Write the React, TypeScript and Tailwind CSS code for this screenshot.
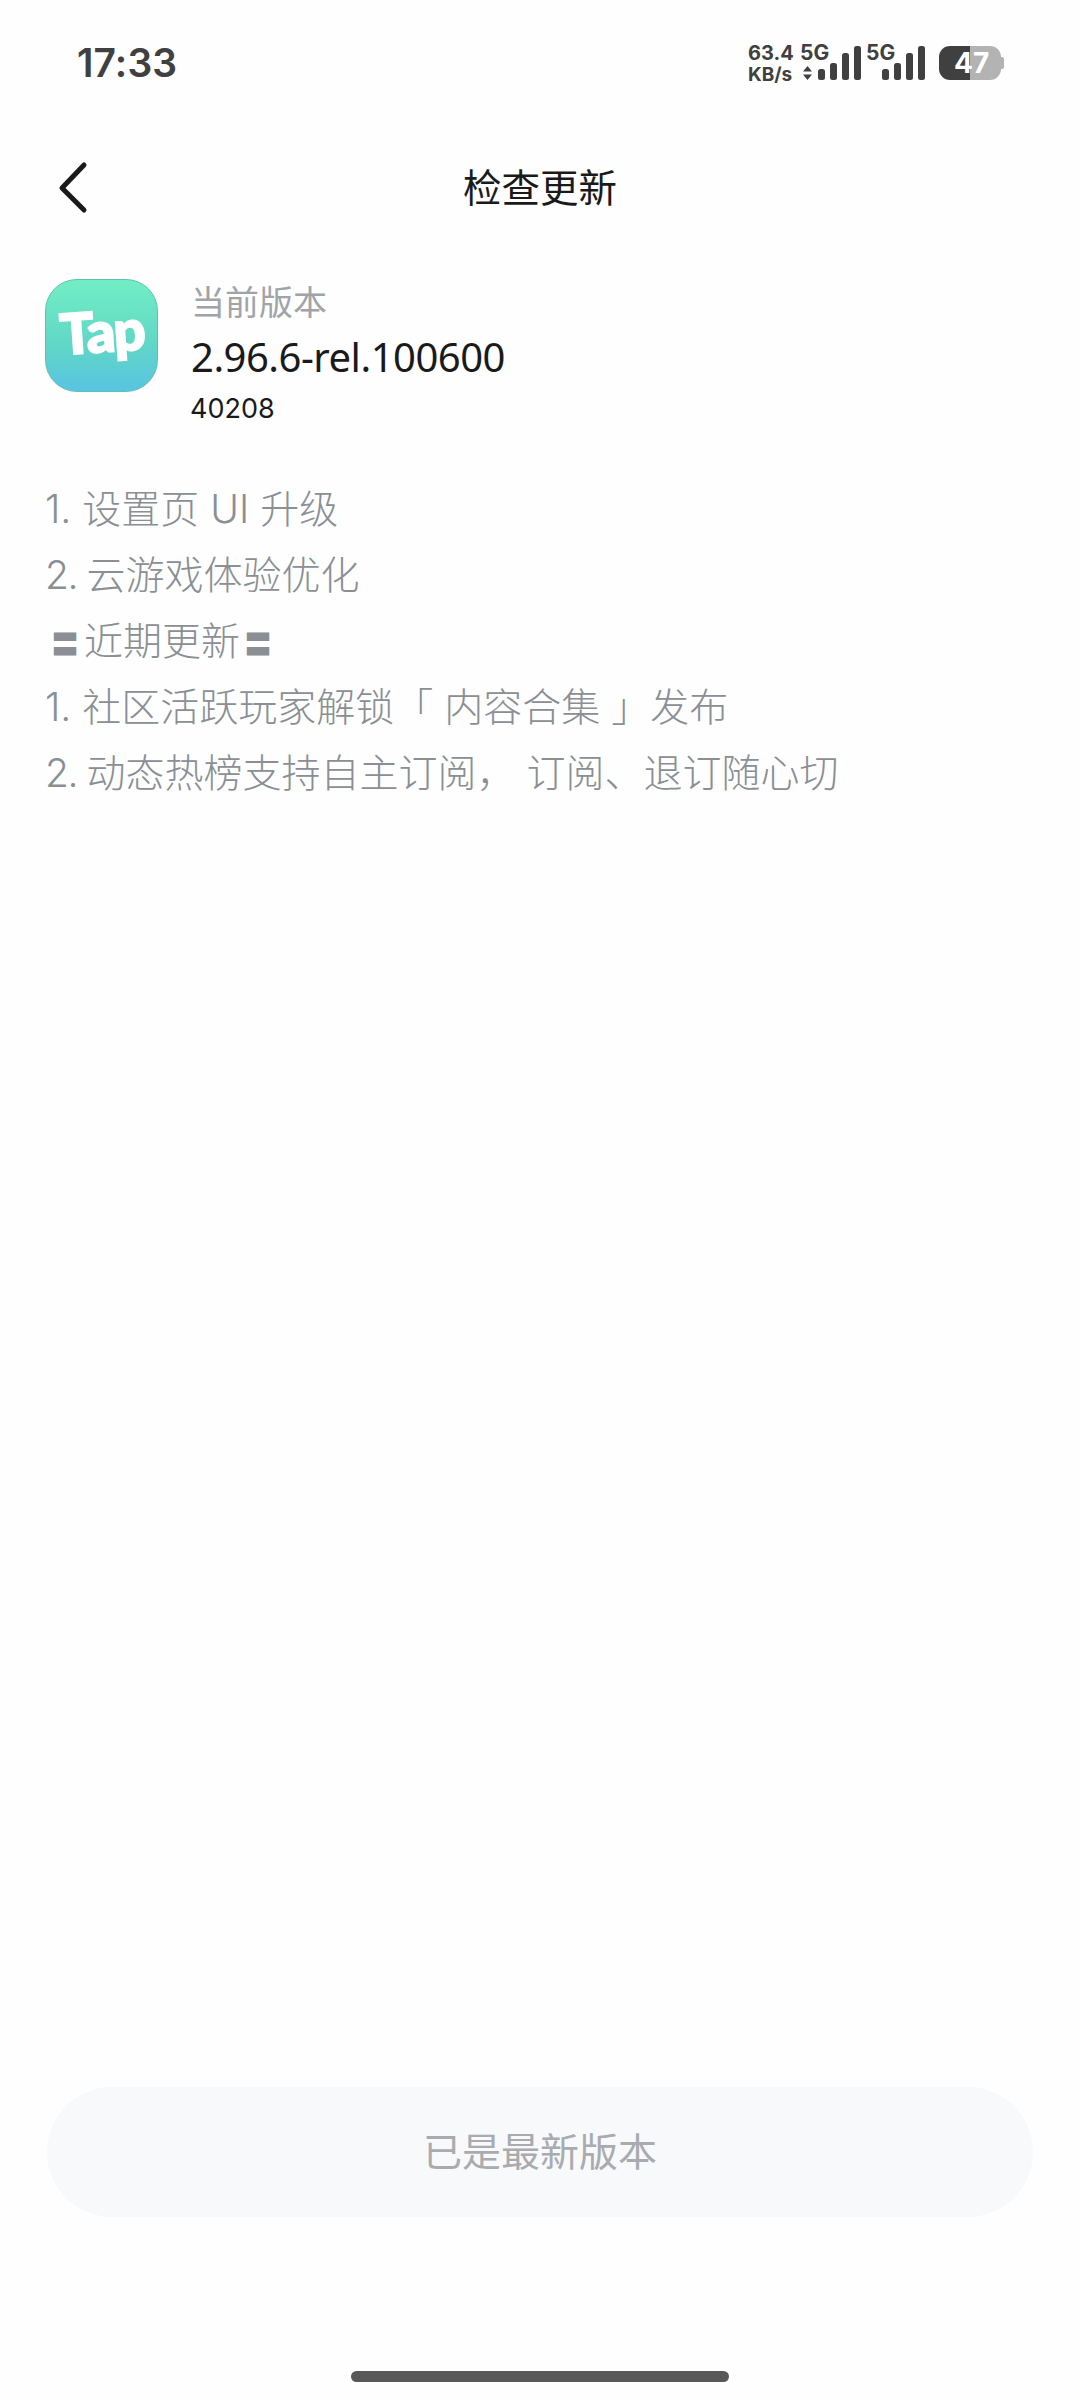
const cjk = "font-['Noto_Sans_CJK_SC','Noto_Sans',sans-serif]";

function Bars() {
  return (
    <svg width="44" height="35" viewBox="0 0 44 35" fill="#404040" className="block">
      <rect x="0" y="23" width="7" height="11" rx="2.5" />
      <rect x="12" y="17" width="7" height="17" rx="2.5" />
      <rect x="24" y="7" width="7" height="27" rx="2.5" />
      <rect x="36" y="0" width="7" height="34" rx="2.5" />
    </svg>
  );
}

function StatusBar() {
  return (
    <div className="flex h-[126px] items-start justify-between pl-[77px] pr-[75px] pt-[41px] text-[#404040]">
      <div className="font-['Inter',sans-serif] text-[39px] font-semibold leading-[44px] tracking-[0.1px]">17:33</div>
      <div className="flex items-start font-['Inter',sans-serif] font-bold">
        <div className="mt-[1px] flex w-[52px] flex-col text-[20px] leading-[22px]">
          <span>63.4</span>
          <span className="text-[19px]">KB/s</span>
        </div>
        <div className="mt-[1px] flex w-[18px] flex-col">
          <span className="h-[22px] w-[30px] text-[21px] leading-[22px]">5G</span>
          <svg width="9" height="14" viewBox="0 0 9 14" fill="#404040" className="ml-[3px] mt-[2px]">
            <path d="M4.5 0 L9 5.5 H0 Z M0 8.5 H9 L4.5 14 Z" />
          </svg>
        </div>
        <div className="mt-[5px]"><Bars /></div>
        <div className="ml-[4px] flex w-[16px] flex-col">
          <span className="mt-[1px] h-[22px] w-[30px] text-[21px] leading-[22px]">5G</span>
        </div>
        <div className="mt-[5px]"><Bars /></div>
        <div className="relative ml-[13px] mt-[5px] flex h-[34px] w-[66px]">
          <div className="h-full w-[31px] rounded-l-[11px] bg-[#404040]" />
          <div className="h-full w-[31px] rounded-r-[11px] bg-[#b3b3b3]" />
          <div className="my-auto h-[12px] w-[3px] rounded-r-[2px] bg-[#b3b3b3]" />
          <span className="absolute left-[15px] top-0 text-[28px] font-bold leading-[34px] text-white">47</span>
        </div>
      </div>
    </div>
  );
}

function TapIcon() {
  return (
    <div className="flex h-[113px] w-[113px] shrink-0 items-center justify-center rounded-[32px] border border-[#5cc3b4] bg-gradient-to-b from-[#72eec4] via-[#60d6c6] via-60% to-[#5ac3e2]">
      <span className="-mt-[10px] -rotate-[4deg] font-['Lato','Inter',sans-serif] text-[56px] font-black leading-none tracking-[-1.5px] text-white [-webkit-text-stroke:2px_white]">
        Tap
      </span>
    </div>
  );
}

export default function App() {
  return (
    <div className={`flex h-[2400px] w-[1080px] flex-col bg-[#fefefe] ${cjk}`}>
      <StatusBar />
      <div className="relative flex h-[124px] items-center justify-center">
        <svg width="30" height="54" viewBox="0 0 30 54" fill="none" className="absolute left-[58px] top-[35px]">
          <path d="M26 4 L4 27 L26 49" stroke="#1a1a1a" strokeWidth="5" strokeLinecap="round" strokeLinejoin="round" />
        </svg>
        <h1 className="-mt-[6px] text-[38.5px] font-normal leading-[50px] text-[#1a1a1a]">检查更新</h1>
      </div>
      <div className="mt-[29px] flex items-start gap-[33px] pl-[45px]">
        <TapIcon />
        <div className="flex flex-col">
          <span className="text-[34px] font-normal leading-[44px] text-[#a0a4a8]">当前版本</span>
          <span className="mt-[9px] font-['Noto_Sans',sans-serif] text-[40px] font-normal leading-[50px] tracking-[-0.5px] text-[#1a1a1a]">2.96.6-rel.100600</span>
          <span className="-ml-[1px] mt-[9px] font-['Inter','Noto_Sans',sans-serif] text-[27px] font-normal leading-[36px] text-[#1a1a1a]">40208</span>
        </div>
      </div>
      <div className="mt-[49px] flex flex-col pl-[45px] font-['Inter','Noto_Sans_CJK_SC',sans-serif] text-[39px] font-light leading-[66px] text-[#8a8f94]">
        <div className="h-[66px] whitespace-nowrap">1. 设置页 UI 升级</div>
        <div className="h-[66px] whitespace-nowrap"><span className="tracking-[-1.5px]">2. </span>云游戏体验优化</div>
        <div className="h-[66px] whitespace-nowrap">
          <span className="ml-[6px] mr-[5px] text-[28px] leading-none">〓</span>近期更新<span className="mx-[4px] text-[28px] leading-none">〓</span>
        </div>
        <div className="h-[66px] whitespace-nowrap">1. 社区活跃玩家解锁「 内容合集 」发布</div>
        <div className="h-[66px] whitespace-nowrap"><span className="tracking-[-1.5px]">2. </span>动态热榜支持自主订阅， 订阅、退订随心切</div>
      </div>
      <div className="mx-[47px] mt-auto flex h-[130px] items-center justify-center rounded-full bg-[#f8f9fb]">
        <span className="-mt-[6px] text-[39px] font-normal text-[#a9abae]">已是最新版本</span>
      </div>
      <div className="mx-auto mb-[18px] mt-[154px] h-[11px] w-[378px] rounded-full bg-[#585858]" />
    </div>
  );
}
